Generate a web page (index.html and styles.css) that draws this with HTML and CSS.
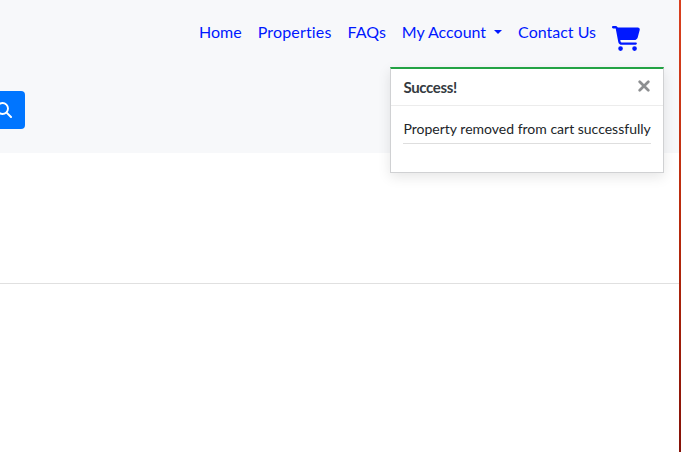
FILE: index.html
```html
<!DOCTYPE html>
<html lang="en">
<head>
<meta charset="utf-8">
<title>Properties</title>
<link rel="stylesheet" href="styles.css">
</head>
<body>
<div class="page">
  <header class="header">
    <nav class="nav">
      <a>Home</a>
      <a class="properties">Properties</a>
      <a>FAQs</a>
      <a class="dropdown">My Account</a>
      <a>Contact Us</a>
      <a class="cart" aria-label="Cart"><svg width="28" height="25" viewBox="0 0 576 512"><path fill="currentColor" d="M0 24C0 10.7 10.7 0 24 0H69.5c22 0 41.5 12.8 50.6 32h411c26.3 0 45.5 25 38.6 50.4l-41 152.3c-8.5 31.4-37 53.3-69.5 53.3H170.7l5.4 28.5c2.2 11.3 12.1 19.5 23.6 19.5H488c13.3 0 24 10.7 24 24s-10.7 24-24 24H199.7c-34.6 0-64.3-24.6-70.7-58.5L77.4 54.5c-.7-3.8-4-6.5-7.9-6.5H24C10.7 48 0 37.3 0 24zM128 464a48 48 0 1 1 96 0 48 48 0 1 1 -96 0zm336-48a48 48 0 1 1 0 96 48 48 0 1 1 0-96z"/></svg></a>
    </nav>
    <button class="search" aria-label="Search"><svg width="16" height="16" viewBox="0 0 16 16" fill="none" stroke="currentColor" stroke-width="1.9" stroke-linecap="round"><circle cx="6.5" cy="6.5" r="5.5"/><path d="M10.6 10.6L15 15" stroke-width="2"/></svg></button>
  </header>
  <main class="content"></main>
</div>
<section class="toast">
  <div class="toast-head">
    <strong>Success!</strong>
    <svg class="close" width="12" height="12" viewBox="0 0 12 12"><path d="M1.7 1.7L10.3 10.3M10.3 1.7L1.7 10.3" stroke="currentColor" stroke-width="2.7" stroke-linecap="round"/></svg>
  </div>
  <div class="toast-body"><p>Property removed from cart successfully</p></div>
</section>
</body>
</html>
```
FILE: styles.css
```css
* { box-sizing: border-box; }
body {
  margin: 0;
  height: 452px;
  overflow: hidden;
  position: relative;
  padding-right: 2px;
  background: linear-gradient(#d9401f, #b82a0c 50%, #851208);
  font: 16px/24px Lato, sans-serif;
  font-variant-ligatures: none;
}
.page { height: 452px; background: #fff; }
.header { height: 153px; background: #f7f8fa; padding-top: 20px; }
.nav {
  display: flex;
  justify-content: flex-end;
  gap: 16px;
  height: 71px;
  padding-right: 39px;
  color: #0018ff;
}
.nav a { white-space: nowrap; }
.properties { letter-spacing: .17px; }
.dropdown::after {
  content: "";
  display: inline-block;
  margin-left: 8px;
  vertical-align: 4px;
  border: 4px solid transparent;
  border-top-color: currentColor;
  border-bottom: 0;
}
.cart { padding-top: 6px; }
.cart svg, .search svg { display: block; }
.search {
  width: 25px;
  height: 38px;
  padding: 0 13px 0 0;
  border: 0;
  border-radius: 0 4px 4px 0;
  display: flex;
  align-items: center;
  justify-content: flex-end;
  overflow: hidden;
  background: #0075ff;
  color: #fff;
}
.search svg { flex: none; }
.content { height: 131px; border-bottom: 1px solid #e0e0e0; }
.toast {
  position: absolute;
  left: 390px;
  top: 67px;
  width: 274px;
  height: 106px;
  border: 1px solid #d0d1d3;
  border-top: 2px solid #22a243;
  background: #fff;
  box-shadow: 0 4px 12px rgba(0, 0, 0, .1);
}
.toast-head {
  height: 37px;
  padding: 0 13px 0 12.5px;
  display: flex;
  align-items: center;
  justify-content: space-between;
  border-bottom: 1px solid #ececec;
  color: #343a40;
  font-size: 15px;
  letter-spacing: -.35px;
}
.close { color: #8d8f91; margin-bottom: 3px; }
.toast-body { padding: 12px; }
.toast-body p {
  margin: 0;
  height: 26px;
  border-bottom: 1px solid #dedede;
  color: #212529;
  font-size: 14px;
  line-height: 22px;
  text-indent: .5px;
  white-space: nowrap;
}
```
